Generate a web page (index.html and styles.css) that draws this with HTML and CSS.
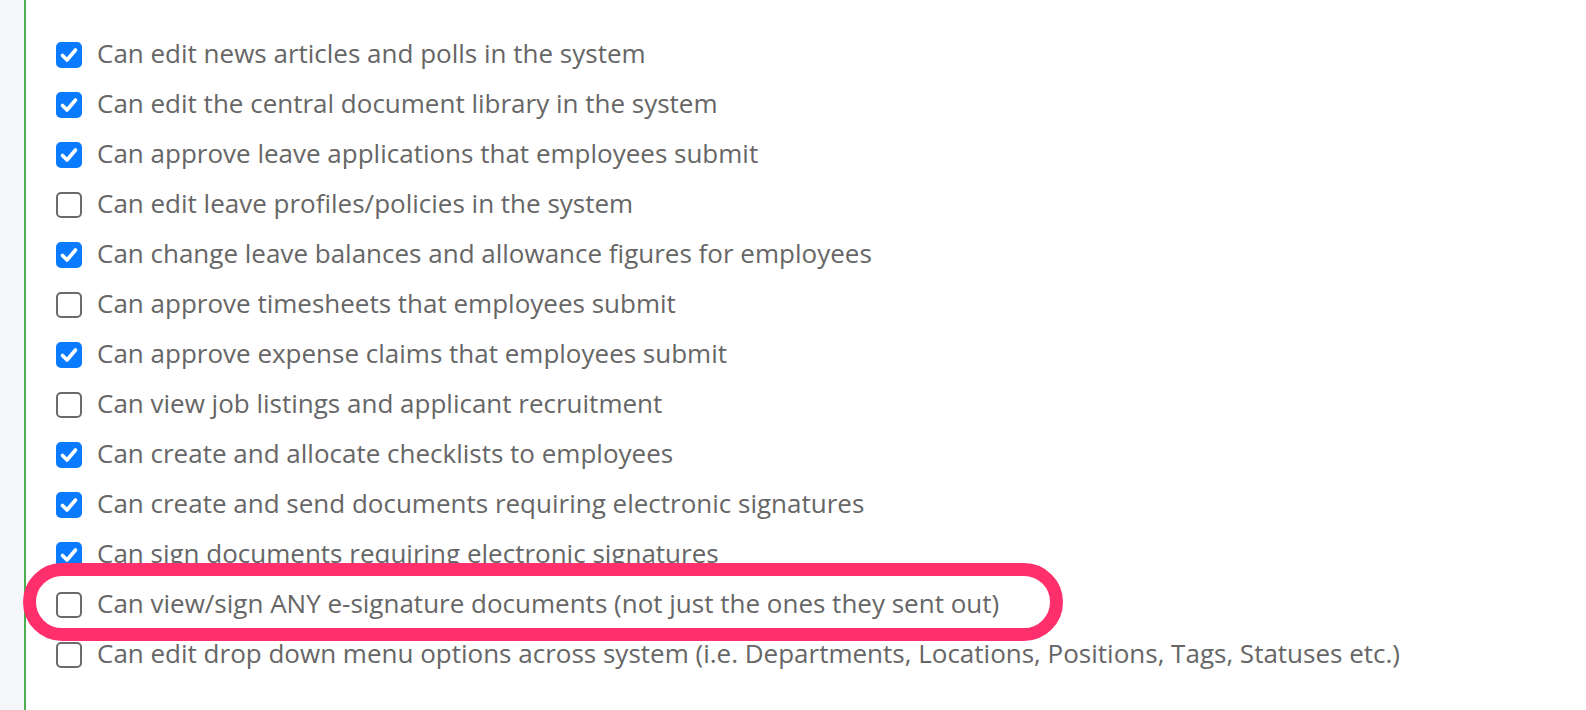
FILE: index.html
```html
<!DOCTYPE html>
<html>
<head>
<meta charset="utf-8">
<link rel="stylesheet" href="styles.css">
</head>
<body>
<div class="page">
  <div class="strip"></div>
  <div class="content">
    <ul class="perms">
      <li class="perm"><span class="box on"><svg viewBox="0 0 26 26"><path d="M6.5 13.5l4.5 4.5 8.5-10" /></svg></span><span class="label">Can edit news articles and polls in the system</span></li>
      <li class="perm"><span class="box on"><svg viewBox="0 0 26 26"><path d="M6.5 13.5l4.5 4.5 8.5-10" /></svg></span><span class="label">Can edit the central document library in the system</span></li>
      <li class="perm"><span class="box on"><svg viewBox="0 0 26 26"><path d="M6.5 13.5l4.5 4.5 8.5-10" /></svg></span><span class="label">Can approve leave applications that employees submit</span></li>
      <li class="perm"><span class="box"></span><span class="label">Can edit leave profiles/policies in the system</span></li>
      <li class="perm"><span class="box on"><svg viewBox="0 0 26 26"><path d="M6.5 13.5l4.5 4.5 8.5-10" /></svg></span><span class="label">Can change leave balances and allowance figures for employees</span></li>
      <li class="perm"><span class="box"></span><span class="label">Can approve timesheets that employees submit</span></li>
      <li class="perm"><span class="box on"><svg viewBox="0 0 26 26"><path d="M6.5 13.5l4.5 4.5 8.5-10" /></svg></span><span class="label">Can approve expense claims that employees submit</span></li>
      <li class="perm"><span class="box"></span><span class="label">Can view job listings and applicant recruitment</span></li>
      <li class="perm"><span class="box on"><svg viewBox="0 0 26 26"><path d="M6.5 13.5l4.5 4.5 8.5-10" /></svg></span><span class="label">Can create and allocate checklists to employees</span></li>
      <li class="perm"><span class="box on"><svg viewBox="0 0 26 26"><path d="M6.5 13.5l4.5 4.5 8.5-10" /></svg></span><span class="label">Can create and send documents requiring electronic signatures</span></li>
      <li class="perm"><span class="box on"><svg viewBox="0 0 26 26"><path d="M6.5 13.5l4.5 4.5 8.5-10" /></svg></span><span class="label">Can sign documents requiring electronic signatures</span></li>
      <li class="perm"><span class="box"></span><span class="label">Can view/sign ANY e-signature documents (not just the ones they sent out)</span></li>
      <li class="perm"><span class="box"></span><span class="label">Can edit drop down menu options across system (i.e. Departments, Locations, Positions, Tags, Statuses etc.)</span></li>
    </ul>
    <div class="highlight"></div>
  </div>
</div>
</body>
</html>
```
FILE: styles.css
```css
html, body {
  margin: 0;
  padding: 0;
  background: #ffffff;
}
.page {
  display: flex;
  height: 710px;
  overflow: hidden;
}
.strip {
  width: 24px;
  flex: none;
  background: #f4f6fa;
  border-right: 2px solid #4caf50;
}
.content {
  flex: 1;
  position: relative;
}
.perms {
  list-style: none;
  margin: 0;
  padding: 30px 0 0 30px;
}
.perm {
  display: flex;
  align-items: center;
  height: 50px;
  gap: 15px;
}
.box {
  width: 26px;
  height: 26px;
  box-sizing: border-box;
  border: 2px solid #6b6b6b;
  border-radius: 5px;
  flex: none;
  background: #fff;
}
.box.on {
  background: #0a7bff;
  border-color: #0a7bff;
  position: relative;
}
.box.on svg {
  position: absolute;
  left: -2px;
  top: -2px;
  width: 26px;
  height: 26px;
}
.box.on path {
  fill: none;
  stroke: #fff;
  stroke-width: 3.6;
  stroke-linecap: round;
  stroke-linejoin: round;
}
.label {
  font-family: "Open Sans", sans-serif;
  font-size: 26px;
  color: #666666;
  white-space: nowrap;
  margin-bottom: 5px;
}
.highlight {
  position: absolute;
  left: -3px;
  top: 563px;
  width: 1040px;
  height: 78px;
  box-sizing: border-box;
  border: 13px solid #ff2f6b;
  border-radius: 39px;
  pointer-events: none;
}
```
